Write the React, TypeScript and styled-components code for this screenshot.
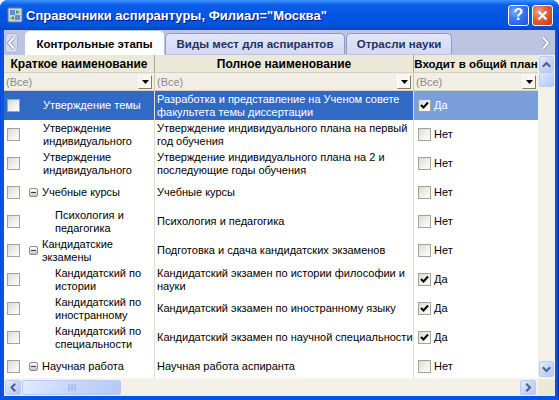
import React from "react";
import styled, { createGlobalStyle } from "styled-components";

const Global = createGlobalStyle`
  html, body { margin: 0; padding: 0; background: #ffffff; }
  body { font-family: "Liberation Sans", Arial, sans-serif; }
`;

const COLS = "151px 259px 124px";

const Window = styled.div`
  width: 559px;
  height: 400px;
  box-sizing: border-box;
  display: flex;
  flex-direction: column;
  background: linear-gradient(to right, #0831d9 0, #0a5ee8 1px, #0055e5 2px, #0055e5 calc(100% - 2px), #0a4ad0 calc(100% - 1px), #00138c 100%);
  border-radius: 8px 8px 0 0;
  overflow: hidden;
`;

const TitleBar = styled.div`
  height: 30px;
  flex: none;
  display: flex;
  align-items: center;
  padding: 0 6px 0 7px;
  background: linear-gradient(to bottom, #3d95ff 0, #2a7cf8 2px, #0d5ee9 5px, #0458e4 12px, #0055e3 60%, #0453dd 85%, #0047c6 100%);
`;

const Title = styled.div`
  flex: 1;
  margin-left: 3px;
  color: #ffffff;
  font: bold 13px "Liberation Sans", Arial, sans-serif;
  text-shadow: 1px 1px 0 #0a1883;
  white-space: nowrap;
`;

const CapButton = styled.div<{ $kind: "help" | "close" }>`
  width: 21px;
  height: 21px;
  box-sizing: border-box;
  margin-left: ${(p) => (p.$kind === "close" ? "3px" : "0")};
  border: 1px solid #ffffff;
  border-radius: 3px;
  display: flex;
  align-items: center;
  justify-content: center;
  color: #ffffff;
  font: bold 16px "Liberation Sans", Arial, sans-serif;
  background: ${(p) =>
    p.$kind === "close"
      ? "radial-gradient(circle at 30% 30%, #f3a68e 0%, #e36a47 35%, #d6451f 75%, #c23a16 100%)"
      : "radial-gradient(circle at 30% 30%, #7fb0ff 0%, #3d7ef8 35%, #2461e8 75%, #1b4ed6 100%)"};
`;

const Body = styled.div`
  flex: 1;
  margin: 0 4px 4px 4px;
  display: flex;
  flex-direction: column;
  background: #ece9d8;
  min-height: 0;
`;

const TabStrip = styled.div`
  height: 25px;
  flex: none;
  display: flex;
  align-items: flex-end;
  background: #bcc4e2;
`;

const TabArrow = styled.div<{ $right?: boolean }>`
  align-self: flex-start;
  margin-top: 3px;
  width: 13px;
  height: 20px;
  box-sizing: border-box;
  margin-left: ${(p) => (p.$right ? "auto" : "1px")};
  margin-right: ${(p) => (p.$right ? "3px" : "7px")};
  background: ${(p) => (p.$right ? "transparent" : "#d3d8ef")};
  border: ${(p) => (p.$right ? "none" : "1px solid #aab2d6")};
  border-radius: 3px;
  display: flex;
  align-items: center;
  justify-content: center;
`;

const Tab = styled.div<{ $active?: boolean; $w: number }>`
  width: ${(p) => p.$w}px;
  height: ${(p) => (p.$active ? 24 : 21)}px;
  box-sizing: border-box;
  margin-left: ${(p) => (p.$active ? 0 : 1)}px;
  margin-bottom: ${(p) => (p.$active ? 0 : 1)}px;
  border: 1px solid ${(p) => (p.$active ? "#ffffff" : "#8f9ac9")};
  border-bottom: none;
  border-radius: 5px 5px 0 0;
  background: ${(p) => (p.$active ? "#ffffff" : "linear-gradient(#e2e6f8, #d3d9f1)")};
  color: ${(p) => (p.$active ? "#000000" : "#253061")};
  font: bold 11.5px "Liberation Sans", Arial, sans-serif;
  display: flex;
  align-items: center;
  justify-content: center;
  white-space: nowrap;
  padding-top: ${(p) => (p.$active ? 1 : 0)}px;
`;

const GridArea = styled.div`
  height: 323px;
  flex: none;
  display: flex;
`;

const Table = styled.div`
  width: 534px;
  display: flex;
  flex-direction: column;
  overflow: hidden;
  background: #ffffff;
`;

const HeaderRow = styled.div`
  display: grid;
  grid-template-columns: ${COLS};
  height: 18px;
  flex: none;
  background: #ece9d8;
`;

const HeaderCell = styled.div<{ $last?: boolean }>`
  box-sizing: border-box;
  border-right: ${(p) => (p.$last ? "none" : "1px solid #aca899")};
  border-bottom: 1px solid #d6d2c2;
  font: bold ${(p) => (p.$last ? "11.5px" : "12px")} "Liberation Sans", Arial, sans-serif;
  color: #000000;
  display: flex;
  align-items: center;
  justify-content: center;
  white-space: nowrap;
  overflow: hidden;
  padding-top: 1px;
`;

const FilterRow = styled.div`
  display: grid;
  grid-template-columns: ${COLS};
  height: 18px;
  flex: none;
  background: #f1efe6;
`;

const FilterCell = styled.div<{ $last?: boolean }>`
  box-sizing: border-box;
  border-right: ${(p) => (p.$last ? "none" : "1px solid #c9c5b3")};
  border-bottom: 1px solid #d6d2c2;
  display: flex;
  align-items: center;
  padding: 0 2px 0 2px;
  font-size: 11px;
  color: #8a8a8a;
`;

const FilterText = styled.span`
  flex: 1;
`;

const DropBtn = styled.div`
  width: 14px;
  height: 14px;
  box-sizing: border-box;
  border: 1px solid;
  border-color: #ffffff #7e7b6e #7e7b6e #ffffff;
  background: #f7f6f2;
  display: flex;
  align-items: center;
  justify-content: center;
`;

const Rows = styled.div`
  flex: 1;
  overflow: hidden;
`;

const Row = styled.div`
  display: grid;
  grid-template-columns: ${COLS};
  height: 29px;
`;

const Cell = styled.div<{ $sel?: boolean; $bg?: string; $last?: boolean }>`
  box-sizing: border-box;
  border-right: ${(p) => (p.$last ? "none" : "1px solid #e2dfd3")};
  background: ${(p) => p.$bg ?? "#ffffff"};
  color: ${(p) => (p.$sel ? "#ffffff" : "#000000")};
  display: flex;
  align-items: center;
  font-size: 11px;
  line-height: 13px;
  overflow: hidden;
  white-space: nowrap;
`;

const ShortCell = styled(Cell)`
  padding-left: 3px;
`;

const FullCell = styled(Cell)`
  padding-left: 2px;
`;

const FlagCell = styled(Cell)`
  padding-left: 4px;
  gap: 3px;
`;

const Lines = styled.div<{ $indent: number }>`
  margin-left: ${(p) => p.$indent}px;
  display: flex;
  flex-direction: column;
`;

const Box = styled.div`
  width: 13px;
  height: 13px;
  flex: none;
  box-sizing: border-box;
  border: 1px solid #a3a393;
  background: linear-gradient(135deg, #dcdcd4 0%, #ededea 50%, #ffffff 100%);
  display: flex;
  align-items: center;
  justify-content: center;
`;

const Minus = styled.div`
  width: 9px;
  height: 9px;
  flex: none;
  box-sizing: border-box;
  margin-left: 9px;
  border: 1px solid #8c8c8c;
  border-radius: 2px;
  background: linear-gradient(#ffffff, #c4c4c4);
  display: flex;
  align-items: center;
  justify-content: center;
  &::after {
    content: "";
    width: 5px;
    height: 1px;
    background: #3a3a3a;
  }
`;

const VScroll = styled.div`
  width: 17px;
  flex: none;
  background: #f3f1ea;
  display: flex;
  flex-direction: column;
  align-items: center;
  padding: 1px 0;
  box-sizing: border-box;
`;

const SBtn = styled.div<{ $w?: number; $h?: number; $gap?: number }>`
  width: ${(p) => p.$w ?? 15}px;
  height: ${(p) => p.$h ?? 15}px;
  margin-left: ${(p) => p.$gap ?? 0}px;
  flex: none;
  box-sizing: border-box;
  border: 1px solid #b9cbf3;
  border-radius: 2px;
  background: linear-gradient(135deg, #e3ecff 0%, #c9d8fc 45%, #b4c8f6 100%);
  display: flex;
  align-items: center;
  justify-content: center;
`;

const Spacer = styled.div`
  flex: 1;
`;

const HScrollRow = styled.div`
  height: 17px;
  flex: none;
  display: flex;
  border-top: 1px solid #f6f5f0;
`;

const HTrack = styled.div`
  width: 534px;
  display: flex;
  align-items: center;
  padding: 0 2px 0 1px;
  box-sizing: border-box;
  background: #f3f1ea;
`;

const Corner = styled.div`
  width: 17px;
  background: #ece9d8;
`;

type Item = {
  kind: "leaf" | "group" | "sub";
  short: string[];
  full: string[];
  inc: boolean;
  sel?: boolean;
};

const items: Item[] = [
  { kind: "leaf", short: ["Утверждение темы"], full: ["Разработка и представление на Ученом совете", "факультета темы диссертации"], inc: true, sel: true },
  { kind: "leaf", short: ["Утверждение", "индивидуального"], full: ["Утверждение индивидуального плана на первый", "год обучения"], inc: false },
  { kind: "leaf", short: ["Утверждение", "индивидуального"], full: ["Утверждение индивидуального плана на 2 и", "последующие годы обучения"], inc: false },
  { kind: "group", short: ["Учебные курсы"], full: ["Учебные курсы"], inc: false },
  { kind: "sub", short: ["Психология и", "педагогика"], full: ["Психология и педагогика"], inc: false },
  { kind: "group", short: ["Кандидатские", "экзамены"], full: ["Подготовка и сдача кандидатских экзаменов"], inc: false },
  { kind: "sub", short: ["Кандидатский по", "истории"], full: ["Кандидатский экзамен по истории философии и", "науки"], inc: true },
  { kind: "sub", short: ["Кандидатский по", "иностранному"], full: ["Кандидатский экзамен по иностранному языку"], inc: true },
  { kind: "sub", short: ["Кандидатский по", "специальности"], full: ["Кандидатский экзамен по научной специальности"], inc: true },
  { kind: "group", short: ["Научная работа"], full: ["Научная работа аспиранта"], inc: false },
];

const Check = ({ on }: { on: boolean }) => (
  <Box>
    {on && (
      <svg width="9" height="9" viewBox="0 0 9 9">
        <path d="M1 4 L3.5 6.5 L8 1.5" stroke="#000" strokeWidth="2" fill="none" />
      </svg>
    )}
  </Box>
);

const Chevron = ({ dir }: { dir: "l" | "r" | "u" | "d" }) => {
  const d = {
    l: "M5.5 1.5 L2.5 4.5 L5.5 7.5",
    r: "M3 1.5 L6 4.5 L3 7.5",
    u: "M1.5 6 L4.5 3 L7.5 6",
    d: "M1.5 3 L4.5 6 L7.5 3",
  }[dir];
  return (
    <svg width="9" height="9" viewBox="0 0 9 9">
      <path d={d} stroke="#4d6185" strokeWidth="2" fill="none" strokeLinecap="square" />
    </svg>
  );
};

const TabChevron = ({ right }: { right?: boolean }) => (
  <svg width="9" height="14" viewBox="0 0 9 14">
    <path
      d={right ? "M2 1.5 L7 7 L2 12.5" : "M7 1.5 L2 7 L7 12.5"}
      stroke="#8a92b4"
      strokeWidth="3.6"
      fill="none"
      strokeLinejoin="round"
    />
    <path
      d={right ? "M2 1.5 L7 7 L2 12.5" : "M7 1.5 L2 7 L7 12.5"}
      stroke="#ffffff"
      strokeWidth="2"
      fill="none"
      strokeLinejoin="round"
    />
  </svg>
);

const Drop = () => (
  <DropBtn>
    <svg width="7" height="4" viewBox="0 0 7 4">
      <path d="M0 0 H7 L3.5 4 Z" fill="#000" />
    </svg>
  </DropBtn>
);

const AppIcon = () => (
  <svg width="16" height="16" viewBox="0 0 16 16">
    <rect x="1" y="1" width="14" height="14" rx="1" fill="#c9d3e6" stroke="#6b7fa6" />
    <path d="M3 3 H8 V8 H3 Z" fill="#5c8fd6" />
    <path d="M8 8 H13 V13 H8 Z" fill="#5c8fd6" />
    <path d="M9 3 L13 5 L9 7 Z" fill="#3fae3a" />
    <path d="M7 9 L3 11 L7 13 Z" fill="#3fae3a" />
  </svg>
);

export default function App() {
  return (
    <>
      <Global />
      <Window>
        <TitleBar>
          <AppIcon />
          <Title>Справочники аспирантуры, Филиал="Москва"</Title>
          <CapButton $kind="help">?</CapButton>
          <CapButton $kind="close">
            <svg width="11" height="11" viewBox="0 0 11 11">
              <path d="M1.5 1.5 L9.5 9.5 M9.5 1.5 L1.5 9.5" stroke="#fff" strokeWidth="2.2" />
            </svg>
          </CapButton>
        </TitleBar>
        <Body>
          <TabStrip>
            <TabArrow>
              <TabChevron />
            </TabArrow>
            <Tab $active $w={139}>Контрольные этапы</Tab>
            <Tab $w={180}>Виды мест для аспирантов</Tab>
            <Tab $w={106}>Отрасли науки</Tab>
            <TabArrow $right>
              <TabChevron right />
            </TabArrow>
          </TabStrip>
          <GridArea>
            <Table>
              <HeaderRow>
                <HeaderCell>Краткое наименование</HeaderCell>
                <HeaderCell>Полное наименование</HeaderCell>
                <HeaderCell $last>Входит в общий план</HeaderCell>
              </HeaderRow>
              <FilterRow>
                <FilterCell>
                  <FilterText>(Все)</FilterText>
                  <Drop />
                </FilterCell>
                <FilterCell>
                  <FilterText>(Все)</FilterText>
                  <Drop />
                </FilterCell>
                <FilterCell $last>
                  <FilterText>(Все)</FilterText>
                  <Drop />
                </FilterCell>
              </FilterRow>
              <Rows>
                {items.map((it, i) => (
                  <Row key={i}>
                    <ShortCell $sel={it.sel} $bg={it.sel ? "#316ac5" : undefined}>
                      <Check on={false} />
                      {it.kind === "group" && <Minus />}
                      <Lines $indent={it.kind === "group" ? 4 : it.kind === "leaf" ? 23 : 35}>
                        {it.short.map((s, j) => (
                          <span key={j}>{s}</span>
                        ))}
                      </Lines>
                    </ShortCell>
                    <FullCell $sel={it.sel} $bg={it.sel ? "#316ac5" : undefined}>
                      <Lines $indent={0}>
                        {it.full.map((s, j) => (
                          <span key={j}>{s}</span>
                        ))}
                      </Lines>
                    </FullCell>
                    <FlagCell $last $sel={it.sel} $bg={it.sel ? "#7b9fdb" : undefined}>
                      <Check on={it.inc} />
                      <span>{it.inc ? "Да" : "Нет"}</span>
                    </FlagCell>
                  </Row>
                ))}
              </Rows>
            </Table>
            <VScroll>
              <SBtn $h={16}>
                <Chevron dir="u" />
              </SBtn>
              <SBtn $h={15} />
              <Spacer />
              <SBtn $h={16}>
                <Chevron dir="d" />
              </SBtn>
            </VScroll>
          </GridArea>
          <HScrollRow>
            <HTrack>
              <SBtn $w={16}>
                <Chevron dir="l" />
              </SBtn>
              <SBtn $w={99} $gap={1}>
                <svg width="8" height="7" viewBox="0 0 8 7">
                  <path d="M1 0 V7 M4 0 V7 M7 0 V7" stroke="#8ea7e4" strokeWidth="1" />
                </svg>
              </SBtn>
              <Spacer />
              <SBtn $w={16}>
                <Chevron dir="r" />
              </SBtn>
            </HTrack>
            <Corner />
          </HScrollRow>
        </Body>
      </Window>
    </>
  );
}
